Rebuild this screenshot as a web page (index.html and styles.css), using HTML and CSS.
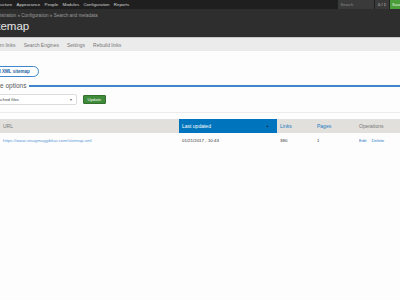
FILE: index.html
```html
<!DOCTYPE html>
<html>
<head>
<meta charset="utf-8">
<link rel="stylesheet" href="styles.css">
</head>
<body>
<div class="toolbar">
  <nav class="tb-menu">
    <span>Structure</span><span>Appearance</span><span>People</span><span>Modules</span><span>Configuration</span><span>Reports</span>
  </nav>
  <div class="tb-right">
    <span class="tb-search">Search</span>
    <span class="tb-count">0 / 1</span>
    <span class="tb-go">Save</span>
  </div>
</div>
<header class="head">
  <div class="crumbs">Administration » Configuration » Search and metadata</div>
  <h1 class="title">Sitemap</h1>
</header>
<nav class="tabs">
  <a class="tab first">Custom links</a>
  <a class="tab">Search Engines</a>
  <a class="tab">Settings</a>
  <a class="tab">Rebuild links</a>
</nav>
<main class="content">
  <div class="actions"><a class="pill">Add XML sitemap</a></div>
  <div class="legend"><span class="legend-text">Update options</span><span class="rule"></span></div>
  <div class="controls">
    <div class="select"><span>Update cached files</span><span class="caret">▾</span></div>
    <button class="btn">Update</button>
  </div>
  <div class="sep"></div>
  <table class="grid">
    <colgroup><col class="c-url"><col class="c-upd"><col class="c-links"><col class="c-pages"><col class="c-ops"></colgroup>
    <thead>
      <tr>
        <th>URL</th>
        <th class="active"><span class="th-in"><span>Last updated</span><span class="sort">▲</span></span></th>
        <th class="sortable">Links</th>
        <th class="sortable">Pages</th>
        <th>Operations</th>
      </tr>
    </thead>
    <tbody>
      <tr>
        <td><a class="url">https://www.sinagmuggibkar.com/sitemap.xml</a></td>
        <td class="date">01/21/2017 - 10:43</td>
        <td>380</td>
        <td>1</td>
        <td><a class="op">Edit</a><a class="op">Delete</a></td>
      </tr>
    </tbody>
  </table>
</main>
</body>
</html>
```

FILE: styles.css
```css
html, body {
  margin: 0;
  padding: 0;
  background: #fdfdfd;
  width: 400px;
  height: 300px;
  overflow: hidden;
  font-family: "Liberation Sans", Arial, sans-serif;
}

.toolbar {
  height: 9px;
  background: #1f1f1f;
  display: flex;
  justify-content: space-between;
  align-items: center;
  overflow: hidden;
}
.tb-menu {
  display: flex;
  gap: 4.3px;
  margin-left: -5.6px;
  font-size: 4.4px;
  color: #d4d4d4;
  white-space: nowrap;
}
.tb-right {
  display: flex;
  height: 9px;
  margin-right: -6px;
}
.tb-search {
  width: 33px;
  background: #3a3a3a;
  color: #8a8a8a;
  font-size: 4px;
  line-height: 9px;
  padding-left: 3px;
}
.tb-count {
  width: 14px;
  margin-left: 1.5px;
  background: #3a3a3a;
  color: #cfcfcf;
  font-size: 4px;
  line-height: 9px;
  text-align: center;
}
.tb-go {
  width: 14px;
  margin-left: 1px;
  background: #4b9f3a;
  color: #e8f5e4;
  font-size: 4px;
  line-height: 9px;
  padding-left: 2px;
}

.head {
  height: 28px;
  background: #2f2e2f;
  box-sizing: border-box;
  padding-top: 3px;
  overflow: hidden;
}
.crumbs {
  font-size: 4.6px;
  line-height: 7px;
  color: #9a9a9a;
  margin-left: -13px;
  white-space: nowrap;
}
.title {
  margin: 0 0 0 -13px;
  font-size: 11.5px;
  line-height: 14px;
  font-weight: normal;
  color: #e4e4e4;
}

.tabs {
  height: 13px;
  background: #ebebeb;
  border-top: 1px solid #c9c9c9;
  display: flex;
  align-items: center;
  gap: 8px;
  font-size: 5px;
  color: #777;
  white-space: nowrap;
}
.tab.first { margin-left: -13px; }

.content {
  display: flex;
  flex-direction: column;
}
.actions {
  padding-top: 15px;
  display: flex;
}
.pill {
  margin-left: -16px;
  height: 11px;
  box-sizing: border-box;
  border: 1px solid #3d86cc;
  border-radius: 6px;
  background: #fff;
  padding: 0 8px 0 7px;
  font-size: 4.5px;
  font-weight: bold;
  line-height: 9px;
  color: #1f5fa0;
  white-space: nowrap;
}
.legend {
  margin-top: 5px;
  height: 8px;
  display: flex;
  align-items: center;
}
.legend-text {
  margin-left: -17.3px;
  font-size: 6.5px;
  line-height: 8px;
  color: #5a5a5a;
  white-space: nowrap;
}
.rule {
  flex: 1;
  height: 1.6px;
  background: #3f86cc;
  margin-left: 3px;
}
.controls {
  margin-top: 4px;
  height: 11px;
  display: flex;
  align-items: center;
}
.select {
  margin-left: -22.5px;
  width: 99.5px;
  height: 11px;
  box-sizing: border-box;
  border: 1px solid #dcdcdc;
  border-radius: 2px;
  background: #fff;
  display: flex;
  align-items: center;
  justify-content: space-between;
  padding: 0 4px 0 2px;
  font-size: 4.4px;
  color: #444;
  white-space: nowrap;
}
.caret {
  font-size: 4px;
  color: #666;
}
.btn {
  margin-left: 6px;
  width: 22.5px;
  height: 9px;
  padding: 0;
  border: 1px solid #356f30;
  border-radius: 1px;
  background: #3f8b3a;
  color: #f2f8f0;
  font-family: inherit;
  font-size: 4.2px;
  line-height: 7px;
}
.sep {
  margin-top: 7px;
  height: 1px;
  background: #ececec;
}

.grid {
  margin-top: 6px;
  width: 400px;
  table-layout: fixed;
  border-collapse: collapse;
  font-size: 4.4px;
}
.c-url { width: 179px; }
.c-upd { width: 98px; }
.c-links { width: 37px; }
.c-pages { width: 42px; }
.c-ops { width: 44px; }
.grid th {
  height: 14px;
  padding: 0 3px;
  background: #e1e0dc;
  color: #777;
  font-size: 5px;
  font-weight: normal;
  text-align: left;
  white-space: nowrap;
}
.grid th.active {
  background: #0074bd;
  color: #fff;
}
.grid th.sortable { color: #1a78c2; }
.th-in {
  display: flex;
  justify-content: space-between;
  align-items: center;
}
.sort {
  color: #1a1a1a;
  font-size: 3px;
  margin-right: 5px;
}
.grid td {
  height: 14px;
  padding: 0 3px;
  color: #333;
  white-space: nowrap;
}
.url { color: #5b9ad8; }
.op { color: #2a7cc4; margin-right: 5px; }
```
